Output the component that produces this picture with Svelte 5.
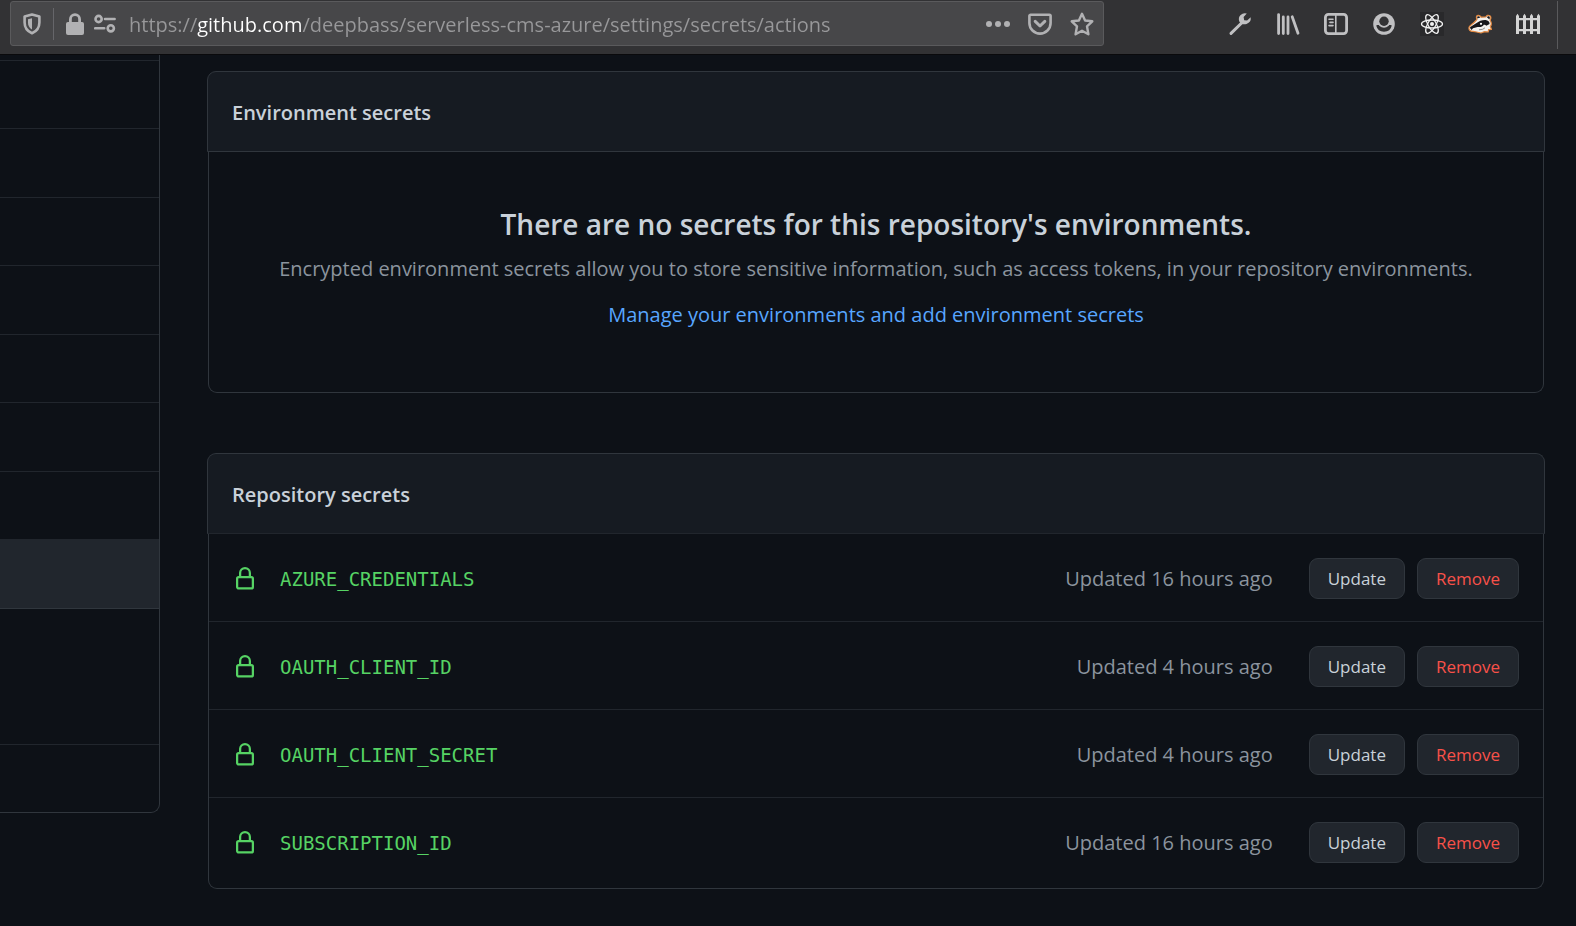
<script>
  const secrets = [
    { name: 'AZURE_CREDENTIALS', updated: 'Updated 16 hours ago' },
    { name: 'OAUTH_CLIENT_ID', updated: 'Updated 4 hours ago' },
    { name: 'OAUTH_CLIENT_SECRET', updated: 'Updated 4 hours ago' },
    { name: 'SUBSCRIPTION_ID', updated: 'Updated 16 hours ago' },
  ];
  const navItems = ['first', '', '', '', '', '', '', '', 'selected', 'group', ''];
  let url = $state('https://github.com/deepbass/serverless-cms-azure/settings/secrets/actions');
</script>

<header class="toolbar">
  <div class="urlbar">
    <button class="tool shield" aria-label="Tracking protection">
      <svg width="20" height="22" viewBox="0 0 20 22"><path d="M10 1.6 17.4 3.6V9.4C17.4 14.4 15 18 10 20.3 5 18 2.6 14.4 2.6 9.4V3.6Z" fill="none" stroke="currentColor" stroke-width="2.6" stroke-linejoin="round" /><path d="M10 5.2V16.6C7.2 14.9 6 12.7 6 9.6V6.2Z" fill="currentColor" /></svg>
    </button>
    <span class="divider"></span>
    <button class="tool lock" aria-label="Site information">
      <svg width="18" height="22" viewBox="0 0 18 22"><path d="M4.4 10V6.2a4.6 4.6 0 0 1 9.2 0V10" fill="none" stroke="currentColor" stroke-width="2.8" /><rect y="9" width="18" height="13" rx="2" fill="currentColor" /></svg>
    </button>
    <button class="tool perms" aria-label="Permissions">
      <svg width="22" height="20" viewBox="0 0 22 20" fill="none" stroke="currentColor" stroke-width="2.6"><circle cx="4.6" cy="5" r="3.1" /><path d="M11 5h9.6M1.2 14.3h9" stroke-linecap="round" /><circle cx="16.8" cy="14.3" r="3.1" /></svg>
    </button>
    <input class="address" type="text" aria-label="Address" spellcheck="false" bind:value={url} />
    <button class="tool" aria-label="Page actions">
      <svg width="24" height="24" viewBox="0 0 24 24" fill="currentColor"><circle cx="3" cy="12" r="3" /><circle cx="12" cy="12" r="3" /><circle cx="21" cy="12" r="3" /></svg>
    </button>
    <button class="tool" aria-label="Save to Pocket">
      <svg width="24" height="24" viewBox="0 0 24 24" fill="none" stroke="currentColor" stroke-width="2.6" stroke-linejoin="round"><path d="M2.6 2.7H21.4a1.2 1.2 0 0 1 1.2 1.2V11a10.6 10.6 0 0 1-21.2 0V3.9a1.2 1.2 0 0 1 1.2-1.2Z" /><path d="m7.2 9.4 4.8 4.6 4.8-4.6" stroke-width="3" stroke-linecap="round" /></svg>
    </button>
    <button class="tool" aria-label="Bookmark this page">
      <svg width="24" height="24" viewBox="0 0 24 24" fill="none" stroke="currentColor" stroke-width="2.4" stroke-linejoin="round"><path d="m12 1.8 3.1 6.7 7.2.8-5.3 5 1.4 8-6.4-3.5-6.4 3.5 1.4-8-5.3-5 7.2-.8Z" /></svg>
    </button>
  </div>
  <div class="extensions">
    <button class="tool" aria-label="Developer tools">
      <svg width="24" height="24" viewBox="0 0 24 24"><path d="M3 21.4 13.6 11" stroke="currentColor" stroke-width="3" stroke-linecap="round" /><path d="M18.8 1.6A6 6 0 0 0 11.2 9.2 6.2 6.2 0 0 0 22.7 5.3L19.1 8.6 16.2 8.2 15.6 5.1Z" fill="currentColor" /></svg>
    </button>
    <button class="tool" aria-label="Library">
      <svg width="24" height="24" viewBox="0 0 24 24" stroke="currentColor" stroke-width="2.8" stroke-linecap="round"><path d="M2.6 2.6V21.6M7.3 5V21.6M12 5V21.6M16.2 4.8 22 21.2" /></svg>
    </button>
    <button class="tool" aria-label="Sidebars">
      <svg width="24" height="24" viewBox="0 0 24 24" fill="none" stroke="currentColor"><rect x="1.4" y="2.4" width="21.2" height="19.2" rx="3" stroke-width="2.8" /><path d="M11.8 3V21" stroke-width="1.6" /><path d="M5 7.2H9M6 10.4H9M5 13.6H9" stroke-width="1.6" stroke-linecap="round" /></svg>
    </button>
    <button class="tool" aria-label="Account">
      <svg width="24" height="24" viewBox="0 0 24 24"><circle cx="12" cy="12" r="10.8" fill="currentColor" /><path d="M4.2 13.6C5.6 13 6.600 13 7.600 13.400L16.400 13.400C17.400 13 18.400 13 19.800 13.600A8 8 0 0 1 4.200 13.600Z" fill="#323234" /><circle cx="12" cy="9.500" r="6.200" fill="currentColor" /><circle cx="12" cy="9.300" r="4.700" fill="#323234" /></svg>
    </button>
    <button class="tool react" aria-label="React Developer Tools">
      <svg width="24" height="24" viewBox="0 0 24 24" fill="none" stroke="#f2f2f2" stroke-width="1.3"><rect width="24" height="24" fill="#29292b" stroke="none" /><ellipse cx="12" cy="12" rx="10.5" ry="4" /><ellipse cx="12" cy="12" rx="10.5" ry="4" transform="rotate(60 12 12)" /><ellipse cx="12" cy="12" rx="10.5" ry="4" transform="rotate(120 12 12)" /><circle cx="12" cy="12" r="2" fill="#f2f2f2" stroke="none" /></svg>
    </button>
    <button class="tool" aria-label="Privacy Badger">
      <svg width="24" height="24" viewBox="0 0 24 24" stroke-linejoin="round"><path d="M1 15.500C1.500 13.500 5 12 7.500 9L9 7.400C8 5.500 8.200 3.600 10 3.300 11.600 3.100 12.600 4.300 13.200 5.200L17.800 5C18.600 3.400 20.300 2.700 21.800 3.800 23.400 5 23 6.800 22 8 23.300 10 23.600 13 22.300 14.600L23.500 17.400 20.600 17.600 20.200 20 16.600 19.600 13 21 8.600 20 5 19.400C2.600 19.600.6 18 1 15.500Z" fill="#f3f1ee" stroke="#e58a42" stroke-width="1.200" /><path d="M1.800 15.800C2.400 14.600 5.600 13.200 8.200 11.300 11 9 14.400 7.800 17.600 8 20 8.300 21.800 10 21.600 12L18.300 13.800C17.600 12.800 16.600 12.400 15.800 12.800 14.800 14.800 12.400 15.400 9.600 15L5 16.200 3.600 18Z" fill="#17171a" /><path d="M9.300 6.400C8.900 4.900 9.600 4.300 10.400 4.300 11.300 4.400 11.900 5 12.300 5.600ZM18.900 5.200C19.600 4 20.800 4 21.500 4.700 22.200 5.600 21.800 6.600 21.200 7.200Z" fill="#17171a" /><circle cx="13" cy="11.800" r="1.100" fill="#fff" /><path d="M11 17.800 14.600 17.300 17 15.800" fill="none" stroke="#8b8b8b" stroke-width="1" /></svg>
    </button>
    <button class="tool fence" aria-label="Fence">
      <svg width="24" height="24" viewBox="0 0 24 24" fill="currentColor"><path d="M0 4 1.5 1.7 3 4V22H0ZM7 4 8.5 1.7 10 4V22H7ZM14 4 15.5 1.7 17 4V22H14ZM21 4 22.5 1.7 24 4V22H21ZM0 6H24V8.2H0ZM0 17H24V19.2H0Z" /></svg>
    </button>
    <span class="edge"></span>
  </div>
</header>

<div class="page">
  <nav class="sidebar" aria-label="Settings">
    {#each navItems as kind}
      <div class="nav-item {kind}"></div>
    {/each}
  </nav>

  <main>
    <section>
      <h2 class="box-header">Environment secrets</h2>
      <div class="box-body blank">
        <h3>There are no secrets for this repository's environments.</h3>
        <p>Encrypted environment secrets allow you to store sensitive information, such as access tokens, in your repository environments.</p>
        <a href="#environments">Manage your environments and add environment secrets</a>
      </div>
    </section>

    <section>
      <h2 class="box-header soft">Repository secrets</h2>
      <ul class="box-body">
        {#each secrets as secret}
          <li>
            <svg class="row-lock" width="24" height="24" viewBox="0 0 16 16" fill="currentColor" aria-hidden="true"><path fill-rule="evenodd" d="M4 4v2h-.25A1.75 1.75 0 002 7.75v5.5c0 .966.784 1.75 1.75 1.75h8.5A1.75 1.75 0 0014 13.25v-5.5A1.75 1.75 0 0012.25 6H12V4a4 4 0 10-8 0zm6.5 2V4a2.5 2.5 0 10-5 0v2h5zM12 7.5h.25a.25.25 0 01.25.25v5.5a.25.25 0 01-.25.25h-8.5a.25.25 0 01-.25-.25v-5.5a.25.25 0 01.25-.25H12z" /></svg>
            <code>{secret.name}</code>
            <span class="updated">{secret.updated}</span>
            <button class="btn">Update</button>
            <button class="btn danger">Remove</button>
          </li>
        {/each}
      </ul>
    </section>
  </main>
</div>

<style>
  :global(body) {
    background: #0d1117;
    color: #c9d1d9;
    font-family: 'Segoe UI', 'Open Sans', sans-serif;
    font-size: 20px;
    line-height: 32px;
  }
  button, input { font: inherit; }
  h2, h3, p, ul { margin: 0; padding: 0; }

  .toolbar {
    display: flex;
    justify-content: space-between;
    box-sizing: border-box;
    height: 55px;
    padding: 1px 18px 0 10px;
    background: #323234;
    border-bottom: 1px solid #0a0a0c;
  }
  .urlbar {
    display: flex;
    align-items: center;
    box-sizing: border-box;
    flex: 0 1 1094px;
    min-width: 0;
    height: 45px;
    padding: 0 9px 0 11px;
    background: #474749;
    border: 1px solid #5a5a5c;
    border-radius: 3px;
    color: #b1b1b3;
  }
  .urlbar .tool:nth-last-child(-n + 3) { margin-left: 18px; }
  .tool {
    display: flex;
    flex: none;
    padding: 0;
    border: 0;
    background: none;
    color: inherit;
  }
  .divider { width: 1px; height: 32px; margin: 0 12px 0 11px; background: #66666a; }
  .perms { margin: 0 13px 0 10px; }
  .address {
    flex: 1;
    min-width: 0;
    height: 32px;
    padding: 2px 0 0;
    border: 0;
    outline: 0;
    color: transparent;
    caret-color: #fff;
    background: linear-gradient(90deg, #98989a 68px, #fff 68px, #fff 173px, #98989a 173px);
    background-clip: text;
    -webkit-background-clip: text;
  }
  .extensions { display: flex; gap: 24px; height: 46px; align-items: center; color: #c0c0c2; }
  .extensions .tool { justify-content: center; width: 24px; }
  .extensions .fence { color: #d4d4d4; }
  .edge { align-self: flex-start; width: 1px; height: 48px; margin-left: -7px; background: #5a5a5c; }

  .page { display: flex; align-items: flex-start; }
  .sidebar {
    box-sizing: border-box;
    flex: none;
    width: 160px;
    border: 1px solid #30363d;
    border-width: 0 1px 1px 0;
    border-radius: 0 0 9px 0;
    overflow: hidden;
  }
  .nav-item { box-sizing: border-box; height: 68px; border-bottom: 1px solid #21262d; }
  .nav-item:nth-child(odd) { height: 69px; }
  .nav-item.first { height: 6px; }
  .nav-item.selected { background: #21262d; border-color: #30363d; }
  .nav-item.group { height: 136px; }
  .nav-item:last-child { height: 67px; border-bottom: 0; }

  main { flex: 1; min-width: 0; padding: 16px 31px 37px 47px; }
  section + section { margin-top: 60px; }
  .box-header {
    padding: 25px 24px 23px;
    background: #161b22;
    border: 1px solid #30363d;
    border-radius: 9px 9px 0 0;
    font-size: 20px;
    line-height: 31px;
    font-weight: 600;
  }
  .box-header.soft { border-bottom-color: #21262d; }
  .box-body {
    margin: 0 1px;
    border: 1px solid #30363d;
    border-top: 0;
    border-radius: 0 0 9px 9px;
  }
  .blank { padding: 48px 24px 61px; text-align: center; }
  .blank h3 { font-size: 28px; line-height: 48px; font-weight: 600; }
  .blank p { margin-bottom: 9px; line-height: 42px; color: #8b949e; }
  .blank a { display: block; color: #58a6ff; text-decoration: none; }

  ul { list-style: none; padding-bottom: 3px; }
  li { display: flex; align-items: center; padding: 24px 24px 22px; }
  li + li { border-top: 1px solid #21262d; }
  .row-lock { flex: none; color: #56d364; }
  code {
    margin-left: 23px;
    font: 19px/32px Consolas, 'DejaVu Sans Mono', monospace;
    color: #56d364;
  }
  .updated { margin: 0 36px 0 auto; color: #8b949e; }
  .btn {
    height: 41px;
    padding: 0 18px;
    background: #21262d;
    border: 1px solid #30363d;
    border-radius: 9px;
    color: #c9d1d9;
    font-size: 17px;
  }
  .btn + .btn { margin-left: 12px; }
  .danger { color: #f85149; }
</style>
